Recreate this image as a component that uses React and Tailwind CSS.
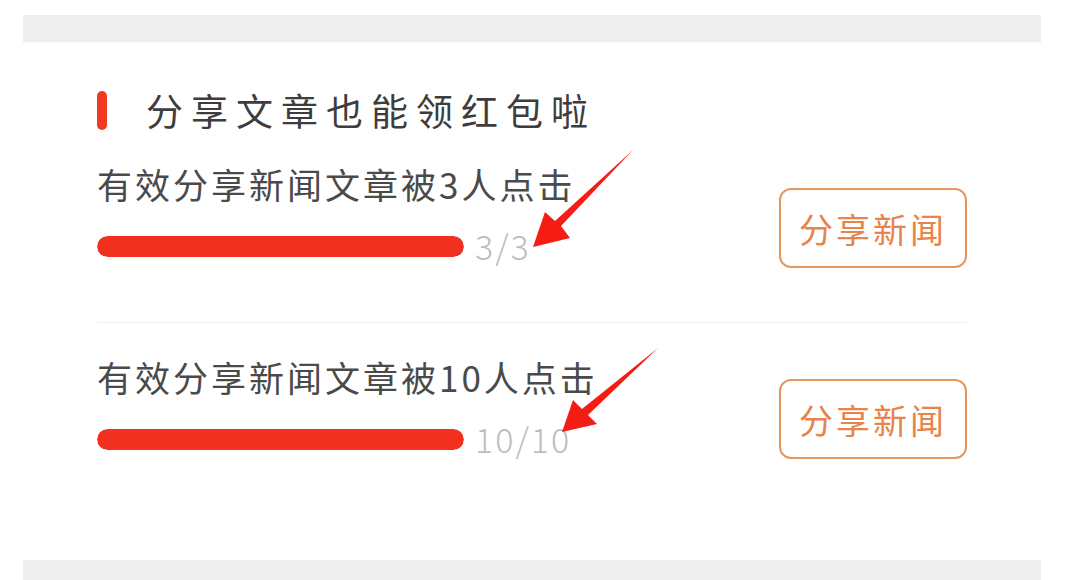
import React from "react";

const tasks = [
  { id: 1, title: "有效分享新闻文章被3人点击", done: 3, total: 3 },
  { id: 2, title: "有效分享新闻文章被10人点击", done: 10, total: 10 },
];

function TaskRow({ task, first }) {
  const pct = (task.done / task.total) * 100;
  return (
    <div
      className={
        first
          ? "flex justify-between h-[158px]"
          : "flex justify-between pt-[34px] border-t border-[#efefef]"
      }
    >
      <div className="flex flex-col">
        <p className="text-[35px] leading-[40px] tracking-[3px] text-[#4a4a4a]">
          {task.title}
        </p>
        <div className="mt-[30px] flex items-center h-[24px]">
          <div className="w-[367px] h-[21px] rounded-full bg-[#f3f3f3] overflow-hidden">
            <div
              className="h-full rounded-full bg-[#f2301f]"
              style={{ width: `${pct}%` }}
            />
          </div>
          <span className="ml-[11px] text-[34px] leading-[24px] tracking-[2px] text-[#bdbdbd] font-light">
            {task.done}/{task.total}
          </span>
        </div>
      </div>
      <button
        className={
          (first ? "mt-[24px] " : "mt-[22px] ") +
          "w-[188px] h-[80px] border-2 border-[#e5975f] rounded-[12px] flex items-center justify-center text-[34px] tracking-[3px] text-[#e8834a]"
        }
      >
        分享新闻
      </button>
    </div>
  );
}

export default function App() {
  return (
    <div
      className="relative w-[1086px] h-[580px] bg-white overflow-hidden"
      style={{ fontFamily: '"Noto Sans CJK SC", "Noto Sans", sans-serif' }}
    >
      <div className="h-[15px]" />
      <div className="ml-[23px] w-[1018px] h-[27px] bg-[#eeeeee]" />

      {/* Card */}
      <div className="ml-[23px] w-[1018px] h-[518px] px-[74px] pt-[49px]">
        <div className="flex items-center h-[39px]">
          <div className="w-[10px] h-[39px] rounded-full bg-[#f03a23]" />
          <h2 className="ml-[39px] text-[37px] leading-[39px] tracking-[8px] text-[#3d3d3d]">
            分享文章也能领红包啦
          </h2>
        </div>

        <div className="mt-[34px]">
          <TaskRow task={tasks[0]} first />
          <TaskRow task={tasks[1]} />
        </div>
      </div>

      <div className="ml-[23px] w-[1018px] h-[20px] bg-[#eeeeee]" />

      {/* Annotation arrows */}
      <svg
        className="absolute inset-0 pointer-events-none"
        width="1086"
        height="580"
        viewBox="0 0 1086 580"
      >
        <polygon
          points="533,247 545,212 555,221 633,150 561,226 570,238"
          fill="#f51c14"
        />
        <polygon
          points="562,432 573,400 582,409 658,348 588,415 597,424"
          fill="#f51c14"
        />
      </svg>
    </div>
  );
}
